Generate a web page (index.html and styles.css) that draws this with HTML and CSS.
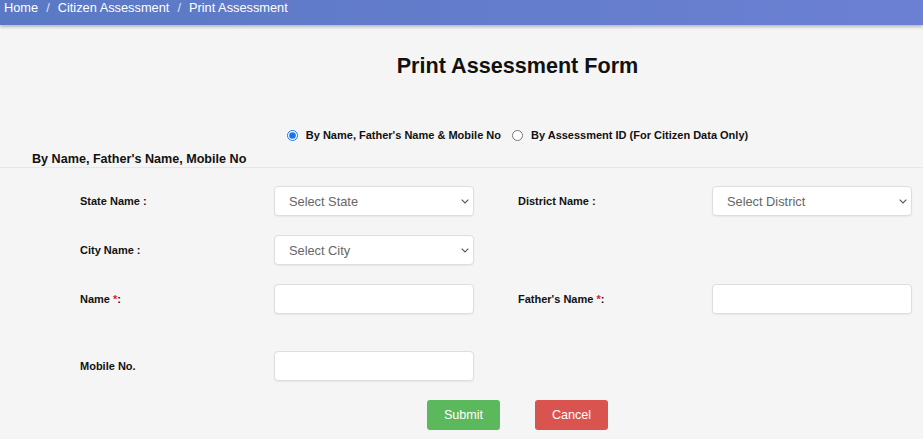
FILE: index.html
```html
<!DOCTYPE html>
<html lang="en">
<head>
<meta charset="utf-8">
<title>Print Assessment Form</title>
<link rel="stylesheet" href="styles.css">
</head>
<body>
<nav class="crumbs">
  <span class="crumb">Home</span><span class="sep">/</span><span class="crumb">Citizen Assessment</span><span class="sep">/</span><span class="crumb">Print Assessment</span>
</nav>
<main class="page">
  <h1 class="title">Print Assessment Form</h1>
  <div class="mode">
    <label class="opt"><input type="radio" name="mode" checked><span>By Name, Father's Name &amp; Mobile No</span></label>
    <label class="opt"><input type="radio" name="mode"><span>By Assessment ID (For Citizen Data Only)</span></label>
  </div>
  <h2 class="section">By Name, Father's Name, Mobile No</h2>
  <form class="form">
    <div class="row">
      <label class="lbl">State Name :</label>
      <div class="sel"><select><option>Select State</option></select><svg class="chev" width="8" height="5" viewBox="0 0 8 5"><path d="M0.7 0.7 L4 4 L7.3 0.7" fill="none" stroke="#555" stroke-width="1.1"/></svg></div>
      <label class="lbl lbl2">District Name :</label>
      <div class="sel"><select><option>Select District</option></select><svg class="chev" width="8" height="5" viewBox="0 0 8 5"><path d="M0.7 0.7 L4 4 L7.3 0.7" fill="none" stroke="#555" stroke-width="1.1"/></svg></div>
    </div>
    <div class="row">
      <label class="lbl">City Name :</label>
      <div class="sel"><select><option>Select City</option></select><svg class="chev" width="8" height="5" viewBox="0 0 8 5"><path d="M0.7 0.7 L4 4 L7.3 0.7" fill="none" stroke="#555" stroke-width="1.1"/></svg></div>
    </div>
    <div class="row row-wide">
      <label class="lbl">Name <span class="req">*</span>:</label>
      <input class="inp" type="text">
      <label class="lbl lbl2">Father's Name <span class="req">*</span>:</label>
      <input class="inp" type="text">
    </div>
    <div class="row">
      <label class="lbl">Mobile No.</label>
      <input class="inp" type="text">
    </div>
    <div class="actions">
      <button type="button" class="btn btn-ok">Submit</button>
      <button type="button" class="btn btn-no">Cancel</button>
    </div>
  </form>
</main>
</body>
</html>
```
FILE: styles.css
```css
* { box-sizing: border-box; }
html, body { margin: 0; padding: 0; }
body {
  background: #f5f5f5;
  font-family: "Liberation Sans", Arial, sans-serif;
  color: #111;
  width: 923px;
  height: 439px;
  overflow: hidden;
}
.crumbs {
  height: 25px;
  background: linear-gradient(to right, #5a79c4, #6c80d3);
  box-shadow: 0 2px 3px rgba(0,0,0,0.25);
  color: #fff;
  font-size: 12.8px;
  line-height: 16px;
  padding: 0 0 0 4px;
  display: flex;
  align-items: flex-start;
}
.crumb { color: #fff; }
.sep { color: #dfe4f5; margin: 0 8px; }
.page { display: flex; flex-direction: column; }
.title {
  margin: 28px 0 0 112px;
  text-align: center;
  font-size: 21.6px;
  line-height: 26px;
  font-weight: bold;
  color: #111;
}
.mode {
  margin: 48px 0 0 112px;
  display: flex;
  justify-content: center;
  gap: 11px;
  font-size: 11px;
  font-weight: bold;
  line-height: 16px;
}
.opt { display: flex; align-items: center; }
.opt input {
  margin: 0 8px 0 0;
  width: 11px;
  height: 11px;
  accent-color: #1a73e8;
}
.section {
  margin: 8px 0 0 0;
  padding: 0 0 0 32px;
  font-size: 12.6px;
  line-height: 16px;
  font-weight: bold;
  border-bottom: 1px solid #e6e6e6;
}
.form {
  margin: 18px 0 0 0;
  padding-left: 80px;
  display: flex;
  flex-direction: column;
  gap: 19px;
}
.row {
  display: grid;
  grid-template-columns: 194px 200px 44px 194px 200px;
  align-items: center;
}
.row-wide { margin-bottom: 18px; }
.lbl {
  font-size: 11px;
  font-weight: bold;
  color: #111;
}
.lbl2 { grid-column: 4; }
.req { color: #d9231d; }
.sel { position: relative; height: 30px; }
.sel select, .inp {
  width: 200px;
  height: 30px;
  border: 1px solid #dedede;
  border-radius: 4px;
  background: #fff;
  box-shadow: 0 1px 2px rgba(0,0,0,0.06);
  font-family: "Liberation Sans", Arial, sans-serif;
  font-size: 12.8px;
  color: #666;
  margin: 0;
}
.sel select {
  appearance: none;
  -webkit-appearance: none;
  padding: 0 0 0 14px;
}
.chev { position: absolute; right: 5px; top: 13px; }
.inp { padding: 0 10px; }
.actions {
  margin-left: 32px;
  display: flex;
  justify-content: center;
  gap: 35px;
}
.btn {
  width: 73px;
  height: 30px;
  border: none;
  border-radius: 3px;
  color: #fff;
  font-family: "Liberation Sans", Arial, sans-serif;
  font-size: 12.6px;
  padding: 0;
}
.btn-ok { background: #5cb85c; }
.btn-no { background: #d9534f; }
```
